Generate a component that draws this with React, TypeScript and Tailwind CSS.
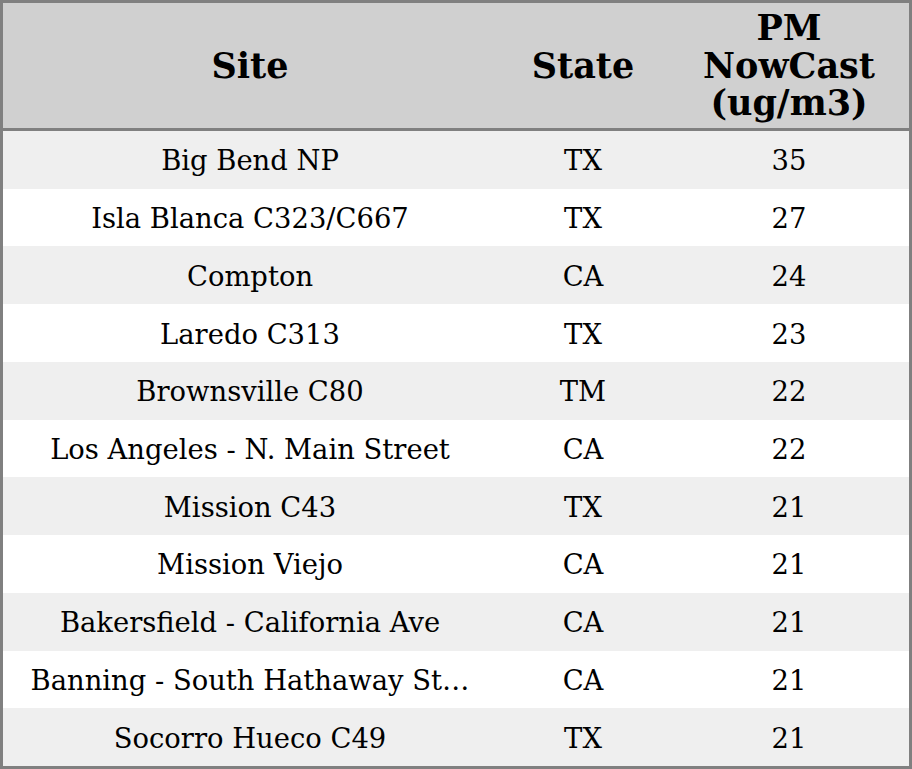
import React from 'react';

type Row = { site: string; state: string; pm: number };

const rows: Row[] = [
  { site: 'Big Bend NP', state: 'TX', pm: 35 },
  { site: 'Isla Blanca C323/C667', state: 'TX', pm: 27 },
  { site: 'Compton', state: 'CA', pm: 24 },
  { site: 'Laredo C313', state: 'TX', pm: 23 },
  { site: 'Brownsville C80', state: 'TM', pm: 22 },
  { site: 'Los Angeles - N. Main Street', state: 'CA', pm: 22 },
  { site: 'Mission C43', state: 'TX', pm: 21 },
  { site: 'Mission Viejo', state: 'CA', pm: 21 },
  { site: 'Bakersfield - California Ave', state: 'CA', pm: 21 },
  { site: 'Banning - South Hathaway St…', state: 'CA', pm: 21 },
  { site: 'Socorro Hueco C49', state: 'TX', pm: 21 },
];

const cols = 'grid grid-cols-[494px_172px_240px]';

export default function App() {
  return (
    <div className="w-[912px] h-[769px] border-[3px] border-[#808080] bg-white font-['DejaVu_Serif',serif] text-black flex flex-col">
      <div className={`${cols} h-[125px] shrink-0 bg-[#d0d0d0] border-b-[3px] border-[#808080] box-content text-[35px] font-bold leading-[37.5px]`}>
        <div className="flex items-center justify-center text-center">Site</div>
        <div className="flex items-center justify-center text-center">State</div>
        <div className="flex items-center justify-center text-center">
          PM
          <br />
          NowCast
          <br />
          (ug/m3)
        </div>
      </div>
      <div className="flex-1 flex flex-col">
        {rows.map((r, i) => (
          <div
            key={r.site}
            className={`${cols} flex-1 items-center pt-[2px] text-[27.4px] ${i % 2 === 0 ? 'bg-[#efefef]' : 'bg-white'}`}
          >
            <div className="px-[20px] text-center whitespace-nowrap">{r.site}</div>
            <div className="text-center">{r.state}</div>
            <div className="text-center">{r.pm}</div>
          </div>
        ))}
      </div>
    </div>
  );
}
